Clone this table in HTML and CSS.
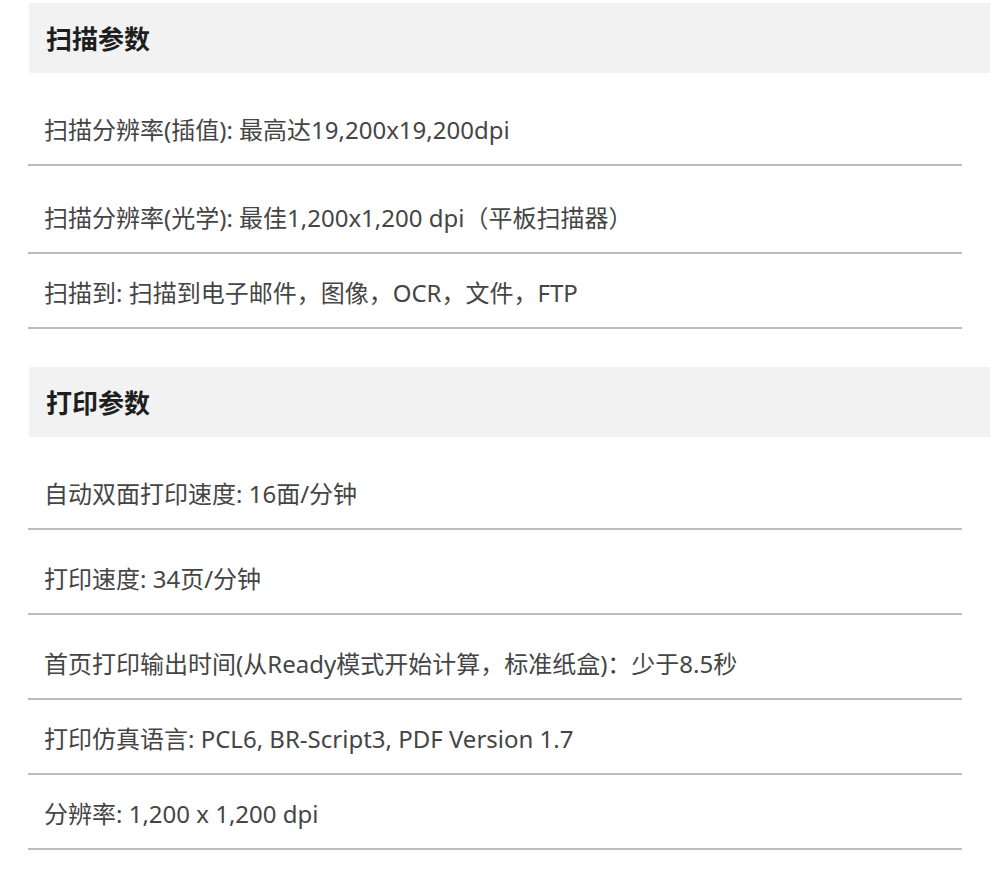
FILE: index.html
```html
<!DOCTYPE html>
<html lang="zh-CN">
<head>
<meta charset="utf-8">
<title>参数</title>
<link rel="stylesheet" href="styles.css">
</head>
<body>
<div class="page">
  <section class="spec">
    <h2 class="spec-title">扫描参数</h2>
    <div class="row gap-xl">扫描分辨率(插值): 最高达19,200x19,200dpi</div>
    <div class="row gap-l">扫描分辨率(光学): 最佳1,200x1,200 dpi（平板扫描器）</div>
    <div class="row gap-s">扫描到: 扫描到电子邮件，图像，OCR，文件，FTP</div>
  </section>
  <section class="spec">
    <h2 class="spec-title">打印参数</h2>
    <div class="row gap-xl">自动双面打印速度: 16面/分钟</div>
    <div class="row gap-m">打印速度: 34页/分钟</div>
    <div class="row gap-m">首页打印输出时间(从Ready模式开始计算，标准纸盒)：少于8.5秒</div>
    <div class="row gap-s">打印仿真语言: PCL6, BR-Script3, PDF Version 1.7</div>
    <div class="row gap-s">分辨率: 1,200 x 1,200 dpi</div>
  </section>
</div>
</body>
</html>
```

FILE: styles.css
```css
html, body {
  margin: 0;
  padding: 0;
  background: #ffffff;
}

body {
  font-family: "Noto Sans", "Noto Sans CJK SC", sans-serif;
  color: #454545;
}

.page {
  padding-top: 3px;
  display: flex;
  flex-direction: column;
  gap: 38px;
}

.spec {
  display: flex;
  flex-direction: column;
}

.spec-title {
  margin: 0 0 0 29px;
  height: 70px;
  line-height: 70px;
  padding-left: 17px;
  background: #f2f2f2;
  font-size: 26px;
  font-weight: 700;
  color: #1e1e1e;
  font-family: "Noto Sans CJK SC", sans-serif;
}

.row {
  margin-left: 28px;
  width: 934px;
  padding-left: 16px;
  box-sizing: border-box;
  font-size: 24px;
  line-height: 30px;
  padding-bottom: 19px;
  border-bottom: 2px solid #bcbcbc;
}

.gap-xl { padding-top: 42px; }
.gap-l  { padding-top: 37px; }
.gap-m  { padding-top: 34px; }
.gap-s  { padding-top: 24px; }
```
